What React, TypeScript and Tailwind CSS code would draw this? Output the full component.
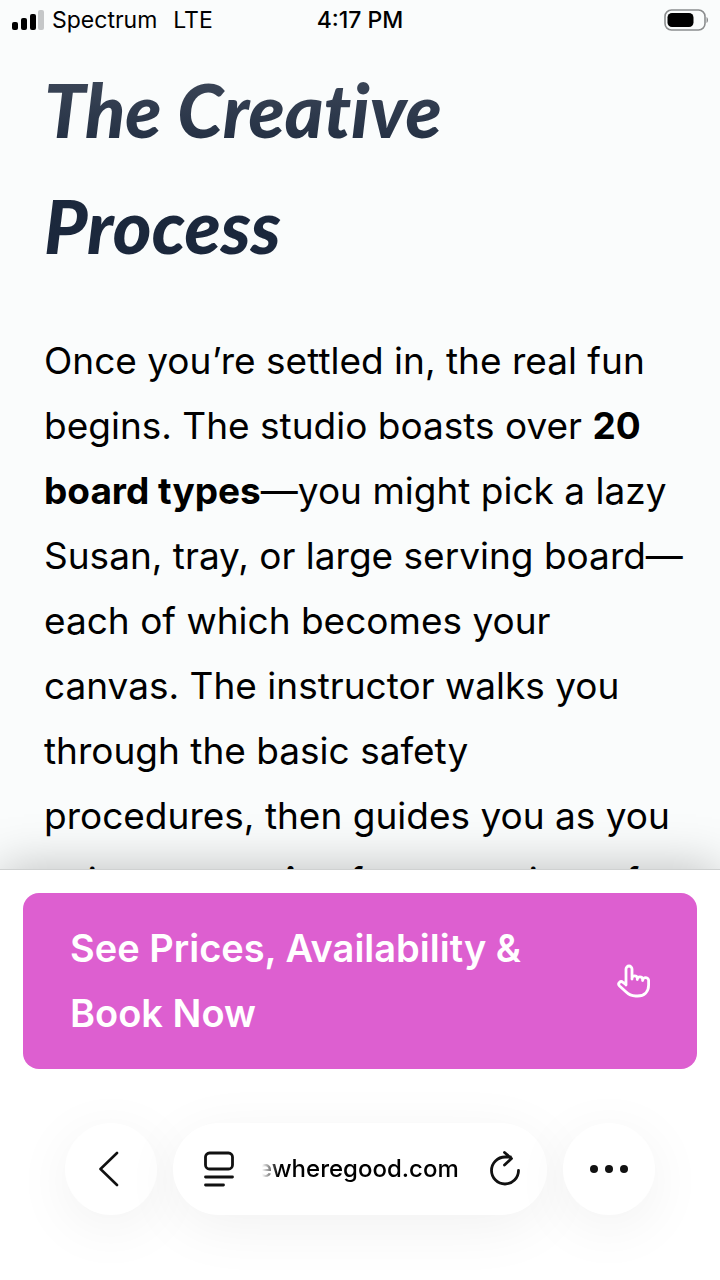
import { useState } from "react";

function StatusBar() {
  return (
    <header className="relative z-10 flex h-10 shrink-0 items-center justify-between px-3 text-black">
      <div className="flex flex-1 items-center gap-2 text-[23px] leading-7">
        <svg width="32" height="20" viewBox="0 0 32 20" role="img" aria-label="Signal strength">
          <rect x="0" y="12" width="6" height="8" rx="2" />
          <rect x="9" y="8" width="6" height="12" rx="2" />
          <rect x="18" y="4" width="6" height="16" rx="2" />
          <rect x="26" y="0" width="6" height="20" rx="2" fill="#c5c7c8" />
        </svg>
        <span>Spectrum</span>
        <span className="pl-2">LTE</span>
      </div>
      <time className="text-[23px] leading-7 font-medium">4:17 PM</time>
      <div className="flex flex-1 justify-end">
        <svg width="44" height="22" viewBox="0 0 44 22" role="img" aria-label="Battery">
          <rect x="1" y="1" width="40" height="20" rx="6.5" fill="none" stroke="#8b8d8e" strokeWidth="1.6" />
          <rect x="3.5" y="4" width="26" height="14" rx="4.5" />
          <path d="M42.5 8c2 1 2 5 0 6z" fill="#8b8d8e" />
        </svg>
      </div>
    </header>
  );
}

function Article() {
  return (
    <main className="min-h-0 flex-1 overflow-hidden px-11">
      <h1 className="bg-linear-to-b from-[#4a5363] via-[#1c293d] via-45% to-[#1a263b] bg-clip-text pt-3 pb-8 font-['Lato'] text-[74px] leading-[116px] font-black text-transparent italic [font-variant-ligatures:none]">
        The Creative
        <br />
        Process
      </h1>
      <p className="pt-3 text-[37px] leading-[65px] whitespace-nowrap text-black">
        Once you’re settled in, the real fun
        <br />
        begins. The studio boasts over <strong>20</strong>
        <br />
        <strong>board types</strong>—you might pick a lazy
        <br />
        Susan, tray, or large serving board—
        <br />
        each of which becomes your
        <br />
        canvas. The instructor walks you
        <br />
        through the basic safety
        <br />
        procedures, then guides you as you
        <br />
        paint your <strong>stains</strong> from a variety of
      </p>
    </main>
  );
}

function BookingBar() {
  return (
    <section className="relative shrink-0 border-t border-[#cfd1d1] bg-white px-[23px] pt-[23px] pb-[54px] shadow-[0_0_48px_rgba(0,0,0,0.26)]">
      <a
        href="#book"
        className="flex items-center justify-between rounded-2xl bg-[#dd5fd0] py-[23px] pr-[46px] pl-[47px] text-[38px] leading-[65px] font-semibold text-white"
      >
        <span>
          See Prices, Availability &amp;
          <br />
          Book Now
        </span>
        <svg
          width="34"
          height="34"
          viewBox="0 0 34 34"
          fill="none"
          stroke="currentColor"
          strokeWidth="2.8"
          strokeLinecap="round"
          strokeLinejoin="round"
          aria-hidden="true"
        >
          <path d="M9 21V5a3 3 0 0 1 6 0v8M15 15v-1a2.7 2.7 0 0 1 5.3 0v1.5M20.3 15a2.7 2.7 0 0 1 5.3 0v1.5M25.6 16.3a3 3 0 0 1 6 .5V21c0 7-4.5 11-11 11h-2c-5 0-7.5-2-10-4.5l-6-5.5c-2.5-2.5.8-5.8 3.4-3.7L9 20.5" />
        </svg>
      </a>
    </section>
  );
}

function BrowserToolbar() {
  const [address, setAddress] = useState("ewheregood.com");

  return (
    <nav className="relative flex shrink-0 gap-4 bg-white px-[65px] pb-[65px] text-[#111]">
      <button
        type="button"
        aria-label="Back"
        className="flex size-[92px] shrink-0 items-center justify-center rounded-full bg-white shadow-[0_12px_60px_rgba(0,0,0,0.06)]"
      >
        <svg width="24" height="36" viewBox="0 0 24 36" fill="none" stroke="currentColor" strokeWidth="2.6" strokeLinecap="round" strokeLinejoin="round">
          <path d="M18 2 1.5 18 18 34" />
        </svg>
      </button>
      <div className="flex min-w-0 flex-1 items-center rounded-full bg-white pr-[26px] pl-[31px] shadow-[0_12px_60px_rgba(0,0,0,0.06)]">
        <button type="button" aria-label="Page menu" className="shrink-0">
          <svg width="30" height="36" viewBox="0 0 30 36" fill="none" stroke="currentColor" strokeWidth="2.8" strokeLinecap="round">
            <rect x="1.5" y="2" width="27" height="16" rx="4" />
            <path d="M1.5 26h27M1.5 34h18" />
          </svg>
        </button>
        <input
          type="text"
          aria-label="Address"
          value={address}
          onChange={(e) => setAddress(e.target.value)}
          className="ml-6 min-w-0 flex-1 mask-[linear-gradient(to_right,transparent_4px,black_20px)] text-right text-2xl font-medium text-black outline-none"
        />
        <button type="button" aria-label="Reload" className="ml-[31px] shrink-0">
          <svg width="32" height="36" viewBox="0 0 32 36" fill="none" stroke="currentColor" strokeWidth="2.8" strokeLinecap="round" strokeLinejoin="round">
            <path d="M29.5 19.5a13.5 13.5 0 1 1-13.5-13.5h5.5M15.5 1.5l7 6-7 6.5" />
          </svg>
        </button>
      </div>
      <button
        type="button"
        aria-label="More"
        className="flex size-[92px] shrink-0 items-center justify-center rounded-full bg-white shadow-[0_12px_60px_rgba(0,0,0,0.06)]"
      >
        <svg width="38" height="8" viewBox="0 0 38 8" fill="currentColor">
          <circle cx="4" cy="4" r="4" />
          <circle cx="19" cy="4" r="4" />
          <circle cx="34" cy="4" r="4" />
        </svg>
      </button>
    </nav>
  );
}

export default function App() {
  return (
    <div className="flex h-screen flex-col overflow-hidden bg-[#fafcfc] font-['Inter',sans-serif]">
      <StatusBar />
      <Article />
      <BookingBar />
      <BrowserToolbar />
    </div>
  );
}
